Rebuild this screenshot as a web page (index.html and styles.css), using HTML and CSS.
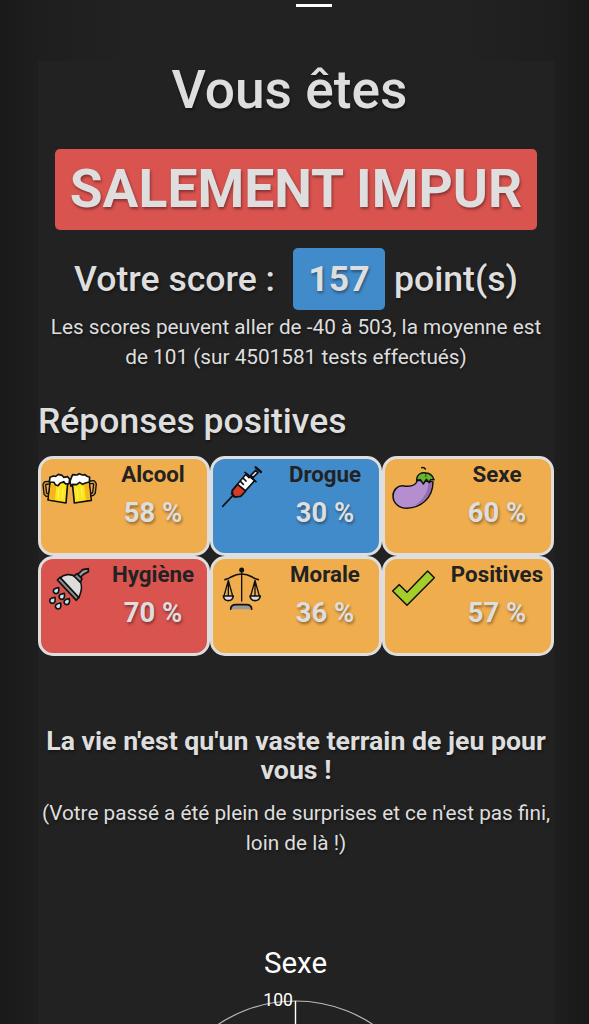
FILE: index.html
```html
<!DOCTYPE html>
<html lang="fr">
<head>
    <meta charset="UTF-8">
    <meta name="viewport" content="width=device-width, initial-scale=1.0">
    <title>Test de pureté</title>
    <link rel="stylesheet" href="styles.css">
</head>
<body>
    <div class="top-bar"><span class="menu-line"></span></div>
    <main class="container">
        <h1 class="title">Vous êtes</h1>
        <div class="verdict"><span class="label label-danger">SALEMENT IMPUR</span></div>
        <h2 class="score">Votre score : <span class="label label-primary">157</span> point(s)</h2>
        <p class="text">Les scores peuvent aller de -40 à 503, la moyenne est de 101 (sur 4501581 tests effectués)</p>

        <h2 class="subtitle">Réponses positives</h2>
        <div class="cards">
            <div class="card warning">
                <svg class="icon" viewBox="12 15 168 168" stroke="#111" stroke-width="5" stroke-linejoin="round" stroke-linecap="round">
                    <path d="M35 83l-13 1-3 5 3 27 4 4 9-1M157 82l10-1 4 6-3 26-4 5-8 1" fill="none" stroke-width="12"/>
                    <path d="M35 83l-13 1-3 5 3 27 4 4 9-1M157 82l10-1 4 6-3 26-4 5-8 1" fill="none" stroke="#dd9a3c" stroke-width="4"/>
                    <path d="M37 77l52 7-5 60-54-9z" fill="#fde51b"/>
                    <path d="M103 84l50-8 7 60-51 8z" fill="#fde51b"/>
                    <path d="M39 87l16 3-4 45-18-3zM138 86l14-3 5 50-13 2z" fill="#f8b51b" stroke="none"/>
                    <path d="M62 101l-2 28M75 103l-2 27M116 99l3 30M130 97l3 28" stroke="#fff36a" stroke-width="3"/>
                    <path d="M34 81l2-14 10-4 7 1 8-6 11 3 5 6 12-2 6 8-2 13-10 1-6-7-10 4-7 8-8-3-4-7z" fill="#fff"/>
                    <path d="M96 79l4-11 4-9 13 1 7-4 9 4 8-1 6 5 8 3-1 14-12 3-8 4-9-6-9 7-12-1-5 6z" fill="#fff"/>
                </svg>
                <div class="card-text"><div class="name">Alcool</div><div class="percent">58 %</div></div>
            </div>
            <div class="card primary">
                <svg class="icon" viewBox="12 15 168 168" stroke="#111" stroke-width="5" stroke-linejoin="round" stroke-linecap="round">
                    <path d="M38 154l31-33" fill="none"/>
                    <path d="M122 61l15-15 7 7-15 15z" fill="#d9e1ed"/>
                    <path d="M137 37l16 14" stroke-width="7"/>
                    <path d="M67 106l42-50 25 21-42 46-18 2-8-9z" fill="#fff"/>
                    <path d="M67 107l16-19 24 20-15 16-18 2-6-7z" fill="#d63b2a"/>
                    <path d="M105 52l33 28M92 80l8 8M100 70l8 8M109 60l8 8M65 116l10 10" fill="none"/>
                </svg>
                <div class="card-text"><div class="name">Drogue</div><div class="percent">30 %</div></div>
            </div>
            <div class="card warning">
                <svg class="icon" viewBox="18 15 168 168" stroke="#111" stroke-width="4.5" stroke-linejoin="round" stroke-linecap="round">
                    <path d="M112 76C108 91 94 96 72 93C53 90 39 105 39 123C39 144 57 160 80 160C123 158 158 130 159 81z" fill="#b58ed0"/>
                    <path d="M145 84C144 112 128 139 99 153C135 142 156 119 156 82z" fill="#916cae" stroke="none"/>
                    <path d="M125 38q8-1 11 4" fill="none"/>
                    <path d="M110 76q0-13 9-19 9-6 19-3 18 1 24 20l-10 0-4 9-9-10-9 14-9-13z" fill="#67b52d"/>
                    <path d="M138 55l-1 10" fill="none" stroke-width="2"/>
                </svg>
                <div class="card-text"><div class="name">Sexe</div><div class="percent">60 %</div></div>
            </div>
            <div class="card danger">
                <svg class="icon" viewBox="12 15 168 168" stroke="#111" stroke-width="5" stroke-linejoin="round" stroke-linecap="round">
                    <path d="M123 70l14-12 14-8 0-9-17 3-18 17z" fill="#999"/>
                    <path d="M65 70C78 57 98 55 112 65C131 75 136 98 122 129z" fill="#deddde"/>
                    <path d="M108 63l9-7 15 15-5 11z" fill="#8c8b8c"/>
                    <path d="M58 75l8-8 56 60-7 9z" fill="#8c8b8c"/>
                    <g fill="#bfe4f3">
                        <path d="M62 98q3 18-8 18a8 8 0 0 1-6-13q4-4 14-5z"/>
                        <path d="M79 115q3 18-8 18a8 8 0 0 1-6-13q4-4 14-5z"/>
                        <path d="M94 131q3 18-8 18a8 8 0 0 1-6-13q4-4 14-5z"/>
                        <path d="M51 127q3 18-8 18a8 8 0 0 1-6-13q4-4 14-5z"/>
                        <path d="M68 144q3 18-8 18a8 8 0 0 1-6-13q4-4 14-5z"/>
                    </g>
                </svg>
                <div class="card-text"><div class="name">Hygiène</div><div class="percent">70 %</div></div>
            </div>
            <div class="card warning">
                <svg class="icon" viewBox="12 15 168 168" stroke="#111" stroke-width="5" stroke-linejoin="round" stroke-linecap="round">
                    <circle cx="95" cy="45" r="5" fill="#111"/>
                    <path d="M45 74q12-3 20-9 13-8 30-8t30 8q8 6 20 9" fill="none"/>
                    <path d="M95 47v91" stroke-width="4"/>
                    <path d="M55 76l-13 47M55 76l13 47M55 76v46M135 76l-13 47M135 76l13 47M135 76v46" fill="none" stroke-width="4"/>
                    <path d="M40 123h30q-2 14-15 14t-15-14zM120 123h31q-2 14-16 14-13 0-15-14z" fill="#ddd"/>
                    <path d="M62 163q0-14 16-14h31q16 0 16 14z" fill="#999" stroke="none"/>
                    <path d="M62 163q0-14 16-14h31q16 0 16 14" fill="none"/>
                </svg>
                <div class="card-text"><div class="name">Morale</div><div class="percent">36 %</div></div>
            </div>
            <div class="card warning">
                <svg class="icon" viewBox="18 15 168 168" stroke="#111" stroke-width="4.5" stroke-linejoin="round">
                    <path d="M38 108l20-19 23 23 62-64 20 20-82 83z" fill="#a6ce2b"/>
                </svg>
                <div class="card-text"><div class="name">Positives</div><div class="percent">57 %</div></div>
            </div>
        </div>

        <h4 class="quote">La vie n'est qu'un vaste terrain de jeu pour vous !</h4>
        <p class="text">(Votre passé a été plein de surprises et ce n'est pas fini, loin de là !)</p>

        <svg class="chart" viewBox="0 0 516 94">
            <text x="257.5" y="43" font-size="29.5" text-anchor="middle">Sexe</text>
            <circle cx="257.5" cy="210" r="139" fill="none" stroke="#bbb" stroke-width="1.2"/>
            <path d="M257.5 71v139" stroke="#fff" stroke-width="1.4"/>
            <text x="255" y="76" font-size="17.6" text-anchor="end">100</text>
        </svg>
    </main>
</body>
</html>
```
FILE: styles.css
```css
* {
    box-sizing: border-box;
}
body {
    margin: 0;
    height: 1024px;
    overflow: hidden;
    background: linear-gradient(to right, #191919, #1e1e1e 38px, #222 130px, #222 460px, #1e1e1e 554px, #191919);
    color: #dedede;
    font-family: Roboto, "Liberation Sans", sans-serif;
    font-size: 20.75px;
    line-height: 29.5px;
    text-shadow: 1px 2px 3px rgba(0, 0, 0, 0.4);
}
.top-bar {
    height: 61px;
    padding: 4px 0 0 3px;
    display: flex;
    justify-content: center;
    align-items: flex-start;
}
.menu-line {
    width: 36px;
    height: 3px;
    margin-left: 35px;
    background: #fff;
}
.container {
    width: 516px;
    margin-left: 38px;
    background: #222;
}
h1, h2, h4, p {
    margin: 0;
    text-align: center;
}
.title {
    padding-right: 13px;
    font-size: 53.3px;
    line-height: 58px;
    font-weight: 500;
}
.verdict {
    margin-top: 30px;
    display: flex;
    justify-content: center;
}
.label {
    display: inline-block;
    border-radius: 5px;
    font-weight: 700;
}
.label-danger {
    width: 482px;
    height: 81px;
    text-align: center;
    font-size: 53.4px;
    line-height: 80px;
    background: #d9534f;
}
.score {
    display: flex;
    justify-content: center;
    margin-top: 18px;
    font-size: 35.6px;
    line-height: 62px;
    font-weight: 500;
}
.label-primary {
    width: 92px;
    margin: 0 9px 0 18px;
    text-align: center;
    background: #428bca;
}
.text {
    padding: 0 3px;
}
.score + .text {
    margin-top: 3px;
    padding: 0 8px;
}
.subtitle {
    margin-top: 29px;
    font-size: 35.5px;
    line-height: 40px;
    font-weight: 500;
    text-align: left;
}
.cards {
    display: grid;
    grid-template-columns: repeat(3, 172px);
    grid-auto-rows: 100px;
    margin-top: 15px;
}
.card {
    display: flex;
    border: 3px solid #dedede;
    border-radius: 15px;
}
.warning {
    background: #f0ad4e;
}
.primary {
    background: #428bca;
}
.danger {
    background: #d9534f;
}
.icon {
    width: 56px;
    height: 56px;
    margin: 1px 0 0 1px;
    flex: none;
}
.card-text {
    flex: 1;
    display: flex;
    flex-direction: column;
    align-items: center;
}
.name {
    margin: 1px 0 0 1px;
    font-size: 22.3px;
    font-weight: 700;
    color: #222;
    text-shadow: none;
}
.percent {
    margin: 9px 0 0 1px;
    font-size: 27.4px;
    font-weight: 700;
}
.quote {
    margin-top: 71px;
    font-size: 26.7px;
    line-height: 29px;
    font-weight: 700;
}
.quote + .text {
    margin-top: 14px;
}
.chart {
    display: block;
    width: 516px;
    height: 94px;
    margin-top: 72px;
    fill: #fff;
    text-shadow: none;
}
```
